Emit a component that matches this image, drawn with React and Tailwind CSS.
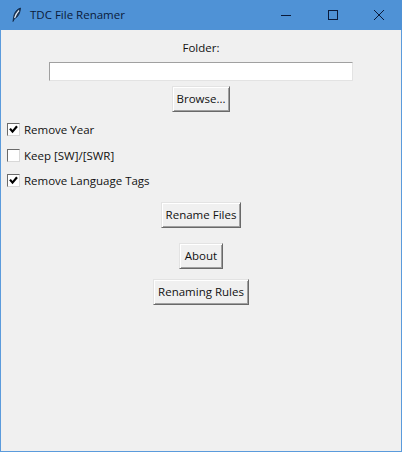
import React from "react";

function Btn({ w, children, className = "" }) {
  return (
    <div className={`h-[26px] ${w} ${className} flex items-center justify-center bg-[#f0f0f0] text-[11.5px] text-[#111] border border-t-[#e3e3e3] border-l-[#e3e3e3] border-r-[#696969] border-b-[#696969] shadow-[inset_1px_1px_0_#ffffff,inset_-1px_-1px_0_#a0a0a0]`}>
      {children}
    </div>
  );
}

function Check({ checked, label, className = "" }) {
  return (
    <div className={`flex items-center h-[19px] pl-[6px] ${className}`}>
      <div className="w-[13px] h-[13px] bg-white border border-t-[#6a6a6a] border-l-[#6a6a6a] border-r-[#d8d8d8] border-b-[#d8d8d8] flex items-center justify-center">
        {checked && (
          <svg width="9" height="9" viewBox="0 0 9 9">
            <path d="M1 3.6 L3.5 6.6 L8 1.2" fill="none" stroke="#000" strokeWidth="2.2" />
          </svg>
        )}
      </div>
      <span className="ml-[4px] text-[11.5px] text-[#111]">{label}</span>
    </div>
  );
}

export default function App() {
  return (
    <div className="w-[402px] h-[452px] flex flex-col bg-[#5b9bdc] px-px pb-px font-['Open_Sans','Noto_Sans',sans-serif] overflow-hidden">
      <div className="h-[30px] shrink-0 -mx-px flex items-center bg-[#4f92d6] text-[#0a1a3a]">
        <svg className="ml-[12px]" width="10" height="16" viewBox="0 0 10 16">
          <path d="M8.5 1 C5 2 2.2 5.5 1.7 9.5 L1 14.5 L2.6 11.5 C5.8 10.5 8.2 6 8.5 1 Z" fill="#1c3a5e" stroke="#0f2340" strokeWidth="0.8" />
          <path d="M7 3.5 C5 5.5 3.5 8 2.6 11" fill="none" stroke="#e8eef5" strokeWidth="1.1" />
        </svg>
        <span className="ml-[8px] text-[11.5px]">TDC File Renamer</span>
        <div className="ml-auto flex items-center">
          <svg width="46" height="30" viewBox="0 0 46 30">
            <path d="M17 15.5 H27" stroke="#0a1a3a" strokeWidth="1" />
          </svg>
          <svg width="46" height="30" viewBox="0 0 46 30">
            <rect x="18.5" y="10.5" width="9" height="9" fill="none" stroke="#0a1a3a" strokeWidth="1" />
          </svg>
          <svg width="46" height="30" viewBox="0 0 46 30">
            <path d="M18 10 L28 20 M28 10 L18 20" stroke="#0a1a3a" strokeWidth="1" />
          </svg>
        </div>
      </div>
      <div className="flex-1 bg-[#f0f0f0] flex flex-col">
        <div className="mt-[9px] h-[17px] flex items-center justify-center text-[11.5px] text-[#111]">Folder:</div>
        <div className="mt-[6px] mx-auto w-[304px] h-[19px] bg-white border border-t-[#a0a0a0] border-l-[#a0a0a0] border-r-[#e3e3e3] border-b-[#e3e3e3]" />
        <Btn w="w-[58px]" className="mt-[5px] mx-auto">Browse...</Btn>
        <Check checked label="Remove Year" className="mt-[8px]" />
        <Check label="Keep [SW]/[SWR]" className="mt-[7px]" />
        <Check checked label="Remove Language Tags" className="mt-[6px]" />
        <Btn w="w-[80px]" className="mt-[12px] mx-auto">Rename Files</Btn>
        <Btn w="w-[44px]" className="mt-[15px] mx-auto">About</Btn>
        <Btn w="w-[96px]" className="mt-[10px] mx-auto">Renaming Rules</Btn>
      </div>
    </div>
  );
}
